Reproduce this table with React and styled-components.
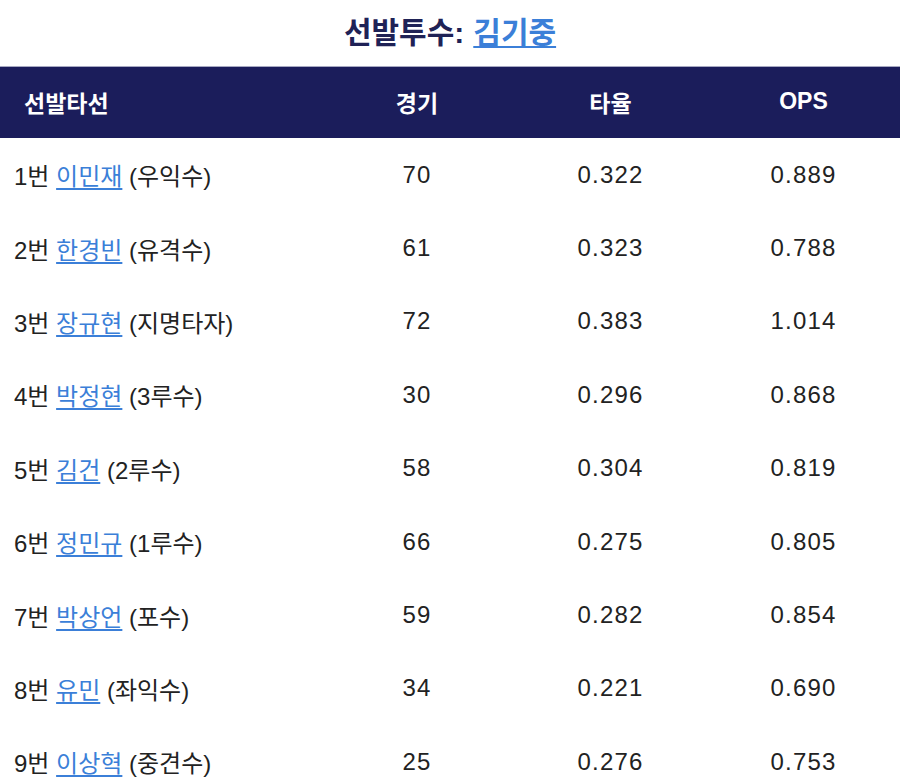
import styled, { createGlobalStyle } from "styled-components";

const GlobalStyle = createGlobalStyle`
    body {
        margin: 0;
        background: #ffffff;
        font-family: "Liberation Sans", "Noto Sans CJK KR", sans-serif;
    }
`;

const Wrap = styled.div`
    width: 900px;
`;

const Title = styled.h2`
    margin: 0;
    box-sizing: border-box;
    height: 67px;
    padding-bottom: 6px;
    display: flex;
    align-items: center;
    justify-content: center;
    gap: 9px;
    font-size: 30px;
    font-weight: bold;
    color: #1f2256;
    border-bottom: 1px solid #a7a9c2;
`;

const Link = styled.a`
    color: #3b7fd8;
    text-decoration: underline;
    text-underline-offset: 3px;
    text-decoration-thickness: 2px;
    cursor: pointer;
`;

const Table = styled.table`
    width: 100%;
    border-collapse: collapse;
    table-layout: fixed;
`;

const Th = styled.th`
    box-sizing: border-box;
    height: 71px;
    background: #1b1d5b;
    color: #ffffff;
    font-size: 23px;
    font-weight: bold;
    text-align: ${(p) => (p.$left ? "left" : "center")};
    padding: ${(p) => (p.$left ? "0 0 2px 24px" : "0 0 2px 0")};
    width: ${(p) => p.$w}px;
`;

const Td = styled.td`
    height: 73.4px;
    font-size: 24px;
    color: #222222;
    text-align: ${(p) => (p.$left ? "left" : "center")};
    padding: ${(p) => (p.$left ? "0 0 0 14px" : "0")};
    letter-spacing: ${(p) => (p.$left ? "0" : "1.2px")};
    white-space: nowrap;
`;

const rows = [
    ["1번", "이민재", "우익수", "70", "0.322", "0.889"],
    ["2번", "한경빈", "유격수", "61", "0.323", "0.788"],
    ["3번", "장규현", "지명타자", "72", "0.383", "1.014"],
    ["4번", "박정현", "3루수", "30", "0.296", "0.868"],
    ["5번", "김건", "2루수", "58", "0.304", "0.819"],
    ["6번", "정민규", "1루수", "66", "0.275", "0.805"],
    ["7번", "박상언", "포수", "59", "0.282", "0.854"],
    ["8번", "유민", "좌익수", "34", "0.221", "0.690"],
    ["9번", "이상혁", "중견수", "25", "0.276", "0.753"],
];

export default function App() {
    return (
        <Wrap>
            <GlobalStyle />
            <Title>
                선발투수: <Link>김기중</Link>
            </Title>
            <Table>
                <thead>
                    <tr>
                        <Th $left $w={320}>선발타선</Th>
                        <Th $w={194}>경기</Th>
                        <Th $w={193}>타율</Th>
                        <Th $w={193}>OPS</Th>
                    </tr>
                </thead>
                <tbody>
                    {rows.map((r) => (
                        <tr key={r[0]}>
                            <Td $left>
                                {r[0]} <Link>{r[1]}</Link> ({r[2]})
                            </Td>
                            <Td>{r[3]}</Td>
                            <Td>{r[4]}</Td>
                            <Td>{r[5]}</Td>
                        </tr>
                    ))}
                </tbody>
            </Table>
        </Wrap>
    );
}
